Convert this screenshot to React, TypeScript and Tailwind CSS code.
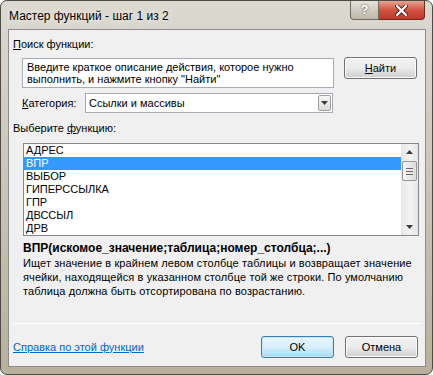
const FONT = { fontFamily: '"Liberation Sans", Arial, sans-serif' };

function Btn({ children, focused }: { children: React.ReactNode; focused?: boolean }) {
  return (
    <div
      className={`w-[73px] h-[22px] rounded-[3px] border flex items-center justify-center text-[11px] text-black ${
        focused
          ? 'border-[#3c7fb1] bg-gradient-to-b from-[#eaf6fd] via-[#d9f0fc] to-[#a7d9f5] shadow-[inset_0_0_0_1px_#c4e5f6]'
          : 'border-[#707070] bg-gradient-to-b from-[#f2f2f2] via-[#ebebeb] to-[#cfcfcf] shadow-[inset_0_0_0_1px_#fcfcfc]'
      }`}
    >
      {children}
    </div>
  );
}

function Arrow({ up }: { up?: boolean }) {
  return (
    <svg width="7" height="4" viewBox="0 0 7 4">
      <path d={up ? 'M0 4 L3.5 0 L7 4 Z' : 'M0 0 L7 0 L3.5 4 Z'} fill="#3b3b3b" />
    </svg>
  );
}

export default function App() {
  const items = ['АДРЕС', 'ВПР', 'ВЫБОР', 'ГИПЕРССЫЛКА', 'ГПР', 'ДВССЫЛ', 'ДРВ'];

  return (
    <div
      className="w-[433px] h-[375px] overflow-hidden rounded-[7px] border border-[#4d4b45] bg-gradient-to-b from-[#dcd9d1] via-[#c9c4b6] to-[#b8b09c] flex flex-col"
      style={FONT}
    >
      {/* title bar */}
      <div className="h-[28px] flex justify-between items-start">
        <span className="pl-[8px] pt-[6px] text-[12px] text-black [text-shadow:0_0_6px_#ffffff]">
          Мастер функций - шаг 1 из 2
        </span>
        <div className="flex mr-[7px]">
          <div className="w-[29px] h-[19px] rounded-bl-[4px] border border-[#6d6a62] border-t-0 bg-gradient-to-b from-[#e6e3dc] via-[#cfcbc0] to-[#bdb7a8] flex items-center justify-center text-white font-bold text-[13px] [text-shadow:0_0_2px_#3a3a3a]">
            ?
          </div>
          <div className="w-[46px] h-[19px] rounded-br-[4px] border border-[#6a2a22] border-t-0 border-l-0 bg-gradient-to-b from-[#e8a493] via-[#d0523f] to-[#c0392b] flex items-center justify-center">
            <svg width="13" height="11" viewBox="0 0 13 11">
              <path d="M2 1 L11 10 M11 1 L2 10" stroke="#4a1a14" strokeWidth="4" strokeLinecap="round" />
              <path d="M2 1 L11 10 M11 1 L2 10" stroke="#ffffff" strokeWidth="2.4" strokeLinecap="round" />
            </svg>
          </div>
        </div>
      </div>

      {/* body */}
      <div className="flex-1 flex pl-[7px]">
        <div className="w-[418px] border border-[#8d8c88] bg-[#f0f0f0] flex flex-col text-[11px] text-black leading-[13px]">
          <div className="ml-[4px] mt-[8px]">
            <u>П</u>оиск функции:
          </div>

          <div className="flex ml-[13px] mt-[6px]">
            <div className="w-[312px] h-[30px] mt-[1px] border border-[#a5acb5] bg-white px-[4px] pt-[2px] leading-[12px]">
              Введите краткое описание действия, которое нужно выполнить, и нажмите кнопку "Найти"
            </div>
            <div className="ml-[10px]">
              <Btn>
                <u>Н</u>айти
              </Btn>
            </div>
          </div>

          <div className="flex items-center ml-[13px] mt-[5px]">
            <span className="w-[63px]">
              <u>К</u>атегория:
            </span>
            <div className="w-[248px] h-[20px] border border-[#a5acb5] bg-white flex items-center">
              <span className="flex-1 pl-[3px]">Ссылки и массивы</span>
              <div className="w-[13px] h-[16px] mr-[1px] border border-[#a0a0a0] rounded-[2px] bg-gradient-to-b from-[#f6f6f6] to-[#dcdcdc] flex items-center justify-center">
                <Arrow />
              </div>
            </div>
          </div>

          <div className="ml-[4px] mt-[9px]">
            Выберите <u>ф</u>ункцию:
          </div>

          <div className="ml-[14px] mt-[8px] w-[396px] h-[93px] border border-[#828790] bg-white flex">
            <div className="flex-1 flex flex-col">
              {items.map((it) => (
                <div
                  key={it}
                  className={`h-[13px] pl-[2px] leading-[13px] ${it === 'ВПР' ? 'bg-[#3399ff] text-white' : ''}`}
                >
                  {it}
                </div>
              ))}
            </div>
            <div className="w-[17px] bg-gradient-to-r from-[#e6e6e6] via-[#f3f3f3] to-[#e6e6e6] flex flex-col items-center">
              <div className="h-[16px] flex items-center justify-center">
                <Arrow up />
              </div>
              <div className="w-[15px] h-[20px] mt-[1px] rounded-[2px] border border-[#979797] bg-gradient-to-r from-[#f5f5f5] to-[#dcdcdc] flex flex-col items-center justify-center gap-[2px]">
                <div className="w-[7px] h-[1px] bg-[#6b6b6b]" />
                <div className="w-[7px] h-[1px] bg-[#6b6b6b]" />
                <div className="w-[7px] h-[1px] bg-[#6b6b6b]" />
              </div>
              <div className="flex-1" />
              <div className="h-[16px] flex items-center justify-center">
                <Arrow />
              </div>
            </div>
          </div>

          <div className="ml-[14px] mt-[6px] font-bold text-[12px]">
            ВПР(искомое_значение;таблица;номер_столбца;...)
          </div>
          <div className="ml-[14px] mt-[1px] w-[398px] leading-[14px] tracking-[0.1px]">
            Ищет значение в крайнем левом столбце таблицы и возвращает значение ячейки, находящейся в указанном
            столбце той же строки. По умолчанию таблица должна быть отсортирована по возрастанию.
          </div>

          <div className="flex-1" />
          <div className="mx-[4px] h-[1px] bg-[#d5d5d5] border-b border-white" />

          <div className="flex items-center mt-[12px] mb-[8px] ml-[4px] mr-[7px]">
            <span className="flex-1 text-[#0066cc] underline">Справка по этой функции</span>
            <Btn focused>OK</Btn>
            <div className="ml-[11px]">
              <Btn>Отмена</Btn>
            </div>
          </div>
        </div>
      </div>
      <div className="h-[7px]" />
    </div>
  );
}
